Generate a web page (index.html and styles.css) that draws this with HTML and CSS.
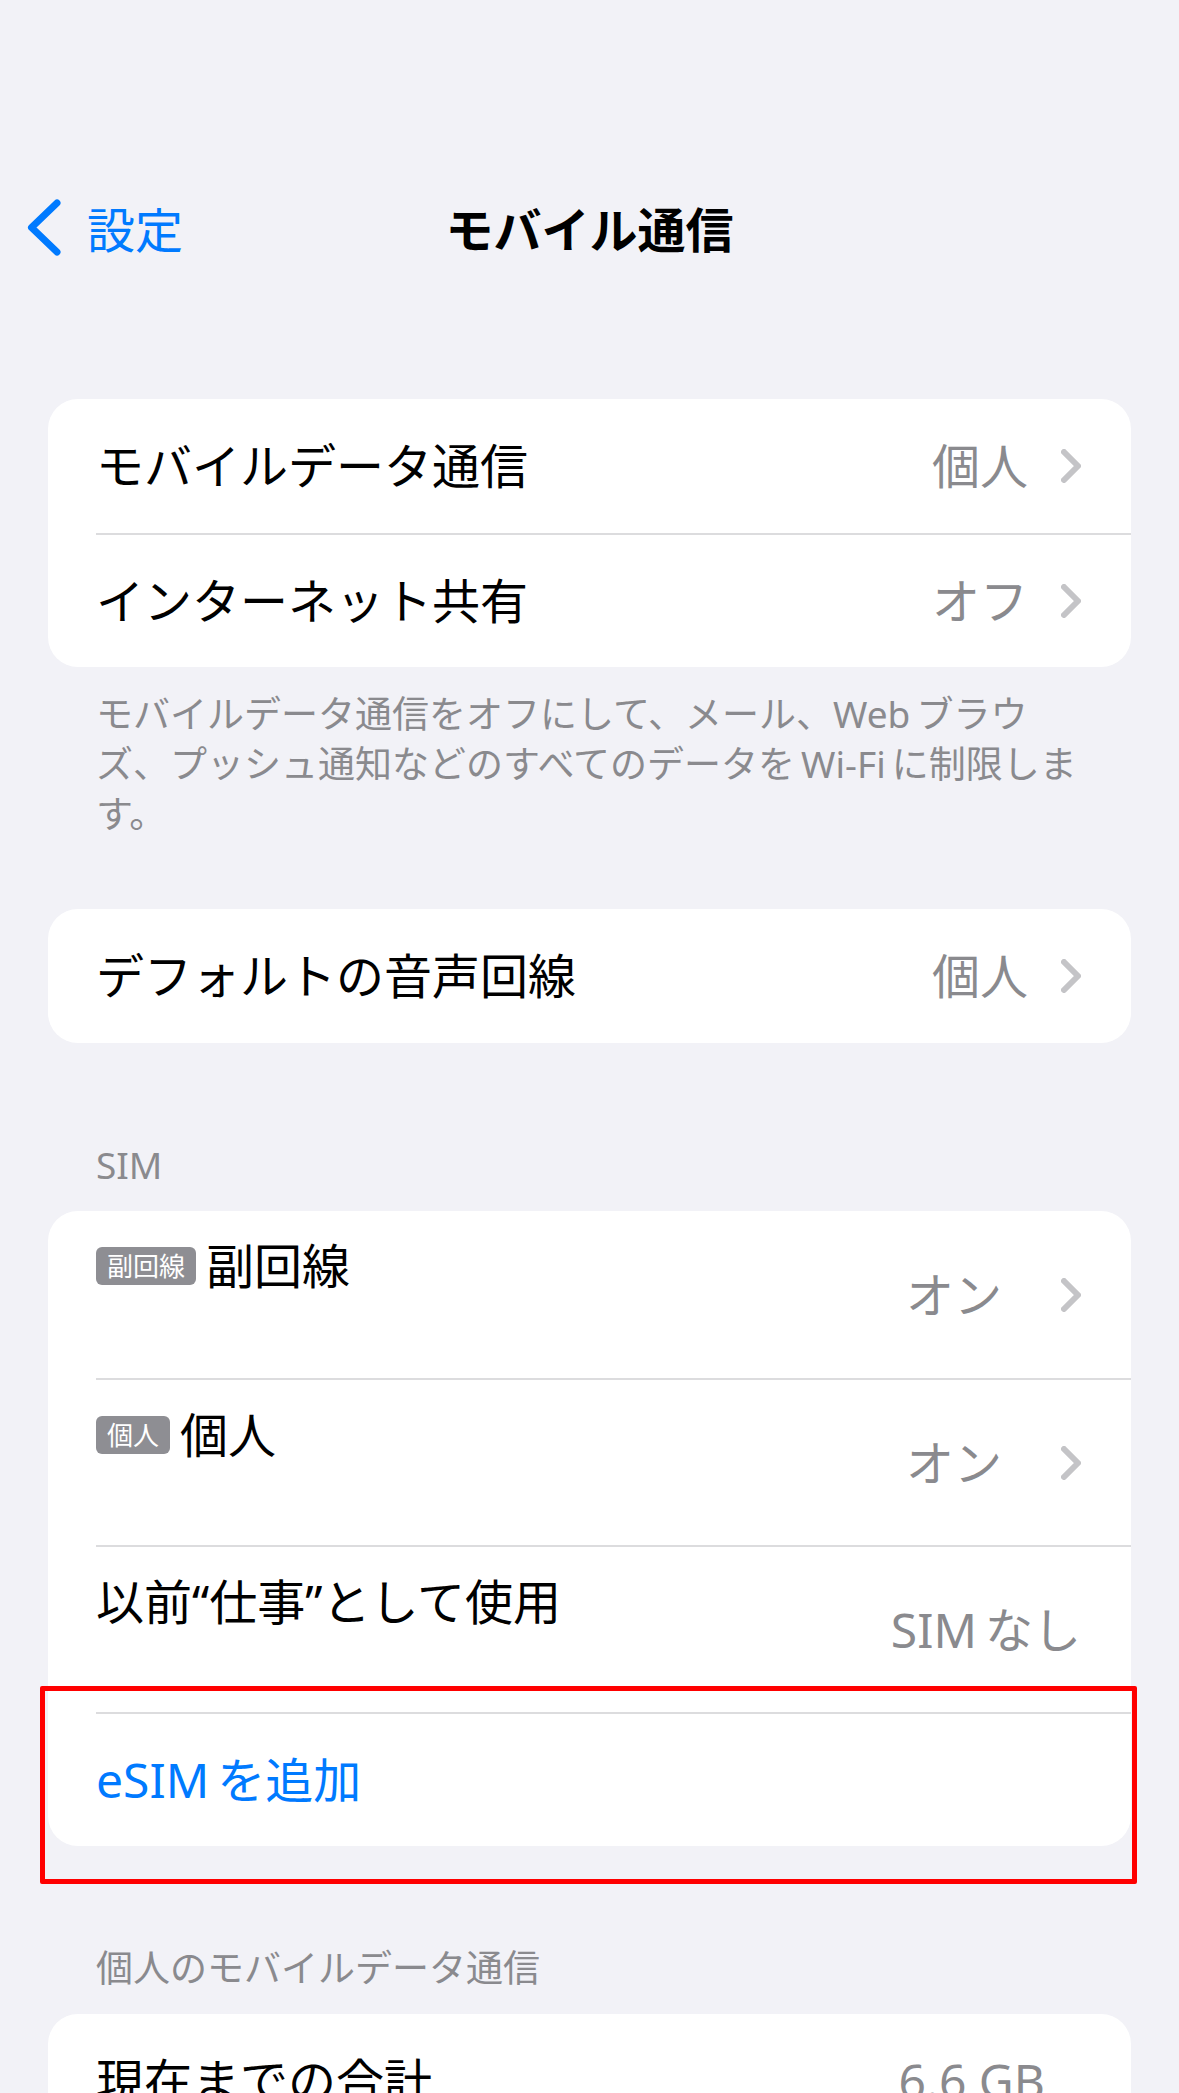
FILE: index.html
```html
<html>
 <head>
  <title>モバイル通信</title>
  <link rel="stylesheet" href="styles.css">
 </head>
<body>
  <div class="statusbar"></div>

  <div class="navbar">
    <a class="back" href="#">
      <svg width="36" height="57" viewBox="0 0 36 57"><polyline points="31,4 5.5,28.5 31,53" /></svg>
      <span>設定</span>
    </a>
    <div class="title">モバイル通信</div>
    <div></div>
  </div>

  <div class="content">

    <div class="card">
      <div class="row"><div class="row-body">
        <span class="label">モバイルデータ通信</span>
        <span class="value">個人</span>
        <svg class="chev" width="20" height="34" viewBox="0 0 20 34"><polyline points="3,3 17,17 3,31" /></svg>
      </div></div>
      <div class="row"><div class="row-body">
        <span class="label">インターネット共有</span>
        <span class="value">オフ</span>
        <svg class="chev" width="20" height="34" viewBox="0 0 20 34"><polyline points="3,3 17,17 3,31" /></svg>
      </div></div>
    </div>

    <p class="footer">モバイルデータ通信をオフにして、メール、Web&thinsp;ブラウ<br>ズ、プッシュ通知などのすべてのデータを&thinsp;Wi-Fi&thinsp;に制限しま<br>す。</p>

    <div class="card spaced">
      <div class="row"><div class="row-body">
        <span class="label">デフォルトの音声回線</span>
        <span class="value">個人</span>
        <svg class="chev" width="20" height="34" viewBox="0 0 20 34"><polyline points="3,3 17,17 3,31" /></svg>
      </div></div>
    </div>

    <div class="header">SIM</div>

    <div class="card">
      <div class="row"><div class="row-body tall">
        <div class="row-main">
          <span class="badge">副回線</span>
          <span class="label">副回線</span>
        </div>
        <span class="value wide">オン</span>
        <svg class="chev" width="20" height="34" viewBox="0 0 20 34"><polyline points="3,3 17,17 3,31" /></svg>
      </div></div>
      <div class="row"><div class="row-body tall">
        <div class="row-main">
          <span class="badge">個人</span>
          <span class="label">個人</span>
        </div>
        <span class="value wide">オン</span>
        <svg class="chev" width="20" height="34" viewBox="0 0 20 34"><polyline points="3,3 17,17 3,31" /></svg>
      </div></div>
      <div class="row"><div class="row-body tall">
        <div class="row-main">
          <span class="label">以前<span class="q">“</span>仕事<span class="q">”</span>として使用</span>
        </div>
        <span class="value">SIM&thinsp;なし</span>
      </div></div>
      <div class="row marked"><div class="row-body">
        <span class="label link">eSIM&thinsp;を追加</span>
      </div>
      <div class="mark"></div></div>
    </div>

    <div class="header">個人のモバイルデータ通信</div>

    <div class="card">
      <div class="row"><div class="row-body">
        <span class="label">現在までの合計</span>
        <span class="value total">6.6 GB</span>
      </div></div>
    </div>

  </div>
</body>
</html>
```

FILE: styles.css
```css
body{
    margin:0;
    background:#f2f2f7;
    font-family:"Noto Sans","Noto Sans CJK JP",sans-serif;
    color:#000;
}

.statusbar{
    height:180px;
}

/* nav bar */
.navbar{
    height:94px;
    display:grid;
    grid-template-columns:1fr auto 1fr;
    align-items:center;
}
.back{
    display:flex;
    align-items:center;
    gap:25px;
    padding-left:26px;
    color:#007aff;
    text-decoration:none;
    font-size:48px;
}
.back svg polyline{
    fill:none;
    stroke:#007aff;
    stroke-width:7;
    stroke-linecap:round;
    stroke-linejoin:round;
}
.title{
    font-size:48px;
    font-weight:700;
}

.content{
    padding:125px 48px 0 48px;
}

/* grouped cards */
.card{
    background:#fff;
    border-radius:30px;
}
.card.spaced{
    margin-top:70px;
}
.row{
    padding-left:48px;
}
.row-body{
    display:flex;
    align-items:center;
    box-sizing:border-box;
    min-height:134px;
    padding-right:50px;
}
.row + .row .row-body{
    border-top:2px solid #dcdcde;
}
.row-body.tall{
    min-height:167px;
}
.row-main{
    flex:1;
    align-self:flex-start;
    padding-top:25px;
    display:flex;
    align-items:center;
    gap:10px;
}
.label{
    flex:1;
    font-size:48px;
    line-height:60px;
}
.row-main .label{
    flex:none;
}
.label .q{
    font-family:"Noto Sans",sans-serif;
}
.label.link{
    color:#007aff;
}
.value{
    font-size:48px;
    line-height:60px;
    color:#8a8a8e;
    margin-right:33px;
}
.value.wide{
    margin-right:59px;
}
.row-body .value:last-child{
    margin-right:0;
}
.row-body .value.total{
    margin-right:36px;
}
.chev polyline{
    fill:none;
    stroke:#c4c4c7;
    stroke-width:6;
    stroke-linecap:round;
    stroke-linejoin:round;
}

.badge{
    background:#8e8e93;
    color:#fff;
    font-size:26px;
    line-height:38px;
    padding:0 11px;
    border-radius:6px;
}

/* section text */
.footer{
    margin:22px 0 0 0;
    padding-left:48px;
    font-size:37px;
    line-height:50px;
    color:#8a8a8e;
}
.header{
    margin:100px 0 18px 0;
    padding-left:48px;
    font-size:37px;
    line-height:50px;
    color:#8a8a8e;
}
.card + .header{
    margin-top:97px;
    margin-bottom:21px;
}

/* red annotation frame */
.marked{
    position:relative;
}
.mark{
    position:absolute;
    top:-26px;
    left:-8px;
    right:-6px;
    bottom:-38px;
    border:5px solid #ff0000;
    border-radius:2px;
    pointer-events:none;
}
```
